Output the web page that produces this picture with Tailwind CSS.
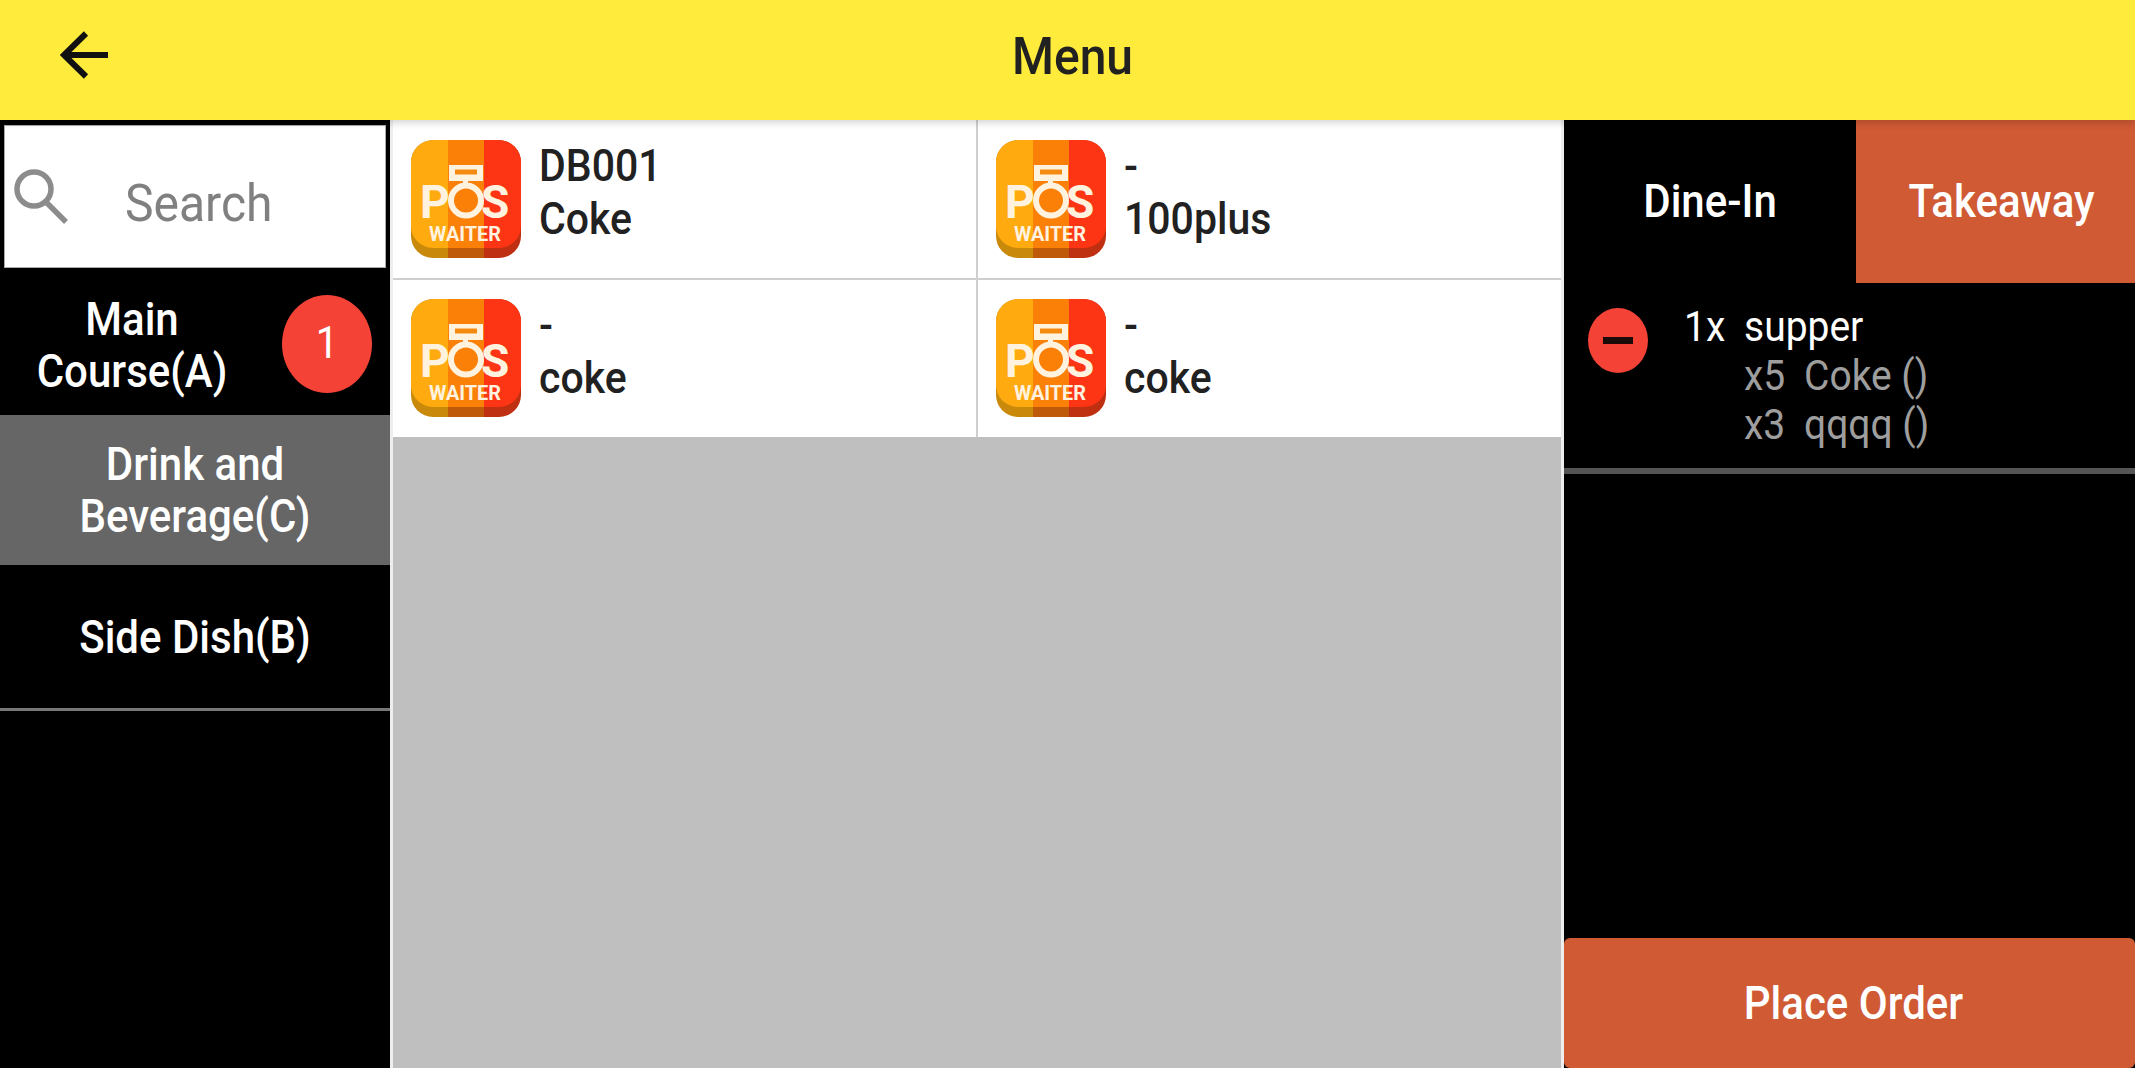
<!DOCTYPE html>
<html lang="en">
<head>
    <meta charset="UTF-8">
    <title>Menu</title>
    <script src="https://cdn.jsdelivr.net/npm/@tailwindcss/browser@4"></script>
</head>
<body class="bg-black font-[Roboto,sans-serif] overflow-hidden">
    <svg class="absolute w-0 h-0">
        <defs>
            <clipPath id="logo-clip"><rect width="110" height="118" rx="22"/></clipPath>
            <clipPath id="logo-top"><rect width="110" height="108" rx="22"/></clipPath>
            <symbol id="pos-logo" viewBox="0 0 110 118">
                <g clip-path="url(#logo-clip)">
                    <rect width="37" height="118" fill="#c98a0b"/>
                    <rect x="37" width="36" height="118" fill="#be5a0a"/>
                    <rect x="73" width="37" height="118" fill="#bf2f12"/>
                    <g clip-path="url(#logo-top)">
                        <rect width="37" height="108" fill="#ffab10"/>
                        <rect x="37" width="36" height="108" fill="#fa8008"/>
                        <rect x="73" width="37" height="108" fill="#fe3514"/>
                    </g>
                </g>
                <path d="M38 25h34v16H38z" fill="#fff3e0"/>
                <path d="M44 29.500h22v5H44z" fill="#f58a10"/>
                <path d="M52 40h5v6h-5z" fill="#fff3e0"/>
                <circle cx="55" cy="60.500" r="15" fill="none" stroke="#fff3e0" stroke-width="6"/>
                <text x="9" y="78" font-family="Roboto" font-weight="700" font-size="46" fill="#fff3e0">P</text>
                <text x="70" y="78" font-family="Roboto" font-weight="700" font-size="46" fill="#fff3e0">S</text>
                <text x="18" y="101" font-family="Roboto" font-weight="700" font-size="20" textLength="72" lengthAdjust="spacingAndGlyphs" fill="#fff3e0">WAITER</text>
            </symbol>
        </defs>
    </svg>

    <div class="flex flex-col w-[2135px] h-[1068px]">
        <!-- Header -->
        <header class="relative z-10 flex items-center justify-center h-[120px] pl-[10px] pb-[6px] bg-[#ffeb3b] shadow-[0_2px_8px_rgba(0,0,0,0.2)]">
            <button class="absolute left-[60px] top-[30px]">
                <svg class="w-[50px] h-[50px]" viewBox="0 0 50 50" fill="none" stroke="#111" stroke-width="6">
                    <path d="M48 25H5M26 3.500 4 25l22 21.500"/>
                </svg>
            </button>
            <h1 class="text-[48px] font-medium text-[#212121] scale-y-[1.09]">Menu</h1>
        </header>

        <div class="flex flex-1 min-h-0">
            <!-- Categories -->
            <aside class="flex flex-col w-[393px] bg-black border-r-[3px] border-[#eeeeee] text-white text-[42px] leading-[48px] font-medium">
                <div class="pt-[5px] px-[4px]">
                    <div class="flex items-center h-[143px] bg-white border border-[#aaaaaa]">
                        <svg class="w-[58px] h-[58px] ml-[8px]" viewBox="0 0 58 58" fill="none" stroke="#8c8c8c" stroke-width="5.500">
                            <circle cx="21" cy="21" r="17"/>
                            <path d="M33 34l20 20"/>
                        </svg>
                        <span class="ml-[54px] pt-[12px] text-[#808080] font-normal text-[48px] scale-y-[1.09]">Search</span>
                    </div>
                </div>
                <div class="relative flex items-center h-[147px] pt-[8px]">
                    <div class="w-[264px] text-center scale-y-[1.09]">Main Course(A)</div>
                    <div class="absolute left-[282px] top-[27px] flex items-center justify-center w-[90px] h-[98px] rounded-[50%] bg-[#f44336] font-normal text-[40px]">
                        <span class="scale-y-[1.09]">1</span>
                    </div>
                </div>
                <div class="flex items-center justify-center h-[150px] pt-[2px] px-[60px] bg-[#666666] text-center">
                    <span class="scale-y-[1.09]">Drink and Beverage(C)</span>
                </div>
                <div class="flex items-center justify-center h-[143px] pt-[2px] text-center">
                    <span class="scale-y-[1.09]">Side Dish(B)</span>
                </div>
                <div class="h-[3px] bg-[#777777]"></div>
            </aside>

            <!-- Items -->
            <main class="w-[1168px] bg-[#bfbfbf]">
                <div class="grid grid-cols-[585px_583px] bg-white text-[#212121] text-[41px] leading-[48px] font-medium">
                    <div class="flex h-[160px] pl-[18px] pt-[20px] gap-[18px] border-r-2 border-b-2 border-[#cfcfcf]">
                        <svg class="w-[110px] h-[118px] shrink-0"><use href="#pos-logo"/></svg>
                        <div class="scale-y-[1.09] origin-top"><p>DB001</p><p>Coke</p></div>
                    </div>
                    <div class="flex h-[160px] pl-[18px] pt-[20px] gap-[18px] border-b-2 border-[#cfcfcf]">
                        <svg class="w-[110px] h-[118px] shrink-0"><use href="#pos-logo"/></svg>
                        <div class="scale-y-[1.09] origin-top"><p>-</p><p>100plus</p></div>
                    </div>
                    <div class="flex h-[157px] pl-[18px] pt-[19px] gap-[18px] border-r-2 border-[#cfcfcf]">
                        <svg class="w-[110px] h-[118px] shrink-0"><use href="#pos-logo"/></svg>
                        <div class="scale-y-[1.09] origin-top"><p>-</p><p>coke</p></div>
                    </div>
                    <div class="flex h-[157px] pl-[18px] pt-[19px] gap-[18px]">
                        <svg class="w-[110px] h-[118px] shrink-0"><use href="#pos-logo"/></svg>
                        <div class="scale-y-[1.09] origin-top"><p>-</p><p>coke</p></div>
                    </div>
                </div>
            </main>

            <!-- Order -->
            <section class="flex flex-col flex-1 bg-black border-l-[3px] border-[#eeeeee] text-white">
                <div class="flex h-[163px] text-[42px] font-medium">
                    <div class="flex items-center justify-center w-[292px]"><span class="scale-y-[1.09]">Dine-In</span></div>
                    <div class="flex items-center justify-center flex-1 pl-[12px] bg-[#cf5a33]"><span class="scale-y-[1.09]">Takeaway</span></div>
                </div>
                <div class="flex h-[185px] pl-[24px] pt-[25px] text-[39px] leading-[45px]">
                    <div class="flex items-center justify-center w-[60px] h-[65px] rounded-[50%] bg-[#f44336]">
                        <div class="w-[30px] h-[7px] bg-[#1c0a08]"></div>
                    </div>
                    <div class="ml-[36px] -mt-[5px] scale-y-[1.09] origin-top">
                        <div class="flex"><span class="w-[60px]">1x</span><span>supper</span></div>
                        <div class="flex pl-[60px] text-[#9e9e9e]"><span class="w-[60px]">x5</span><span>Coke ()</span></div>
                        <div class="flex pl-[60px] text-[#9e9e9e]"><span class="w-[60px]">x3</span><span>qqqq ()</span></div>
                    </div>
                </div>
                <div class="h-[6px] bg-[#555555]"></div>
                <button class="flex items-center justify-center mt-auto h-[130px] pl-[8px] rounded-[6px] bg-[#cf5a33] text-[42px] font-medium">
                    <span class="scale-y-[1.09]">Place Order</span>
                </button>
            </section>
        </div>
    </div>
</body>
</html>
